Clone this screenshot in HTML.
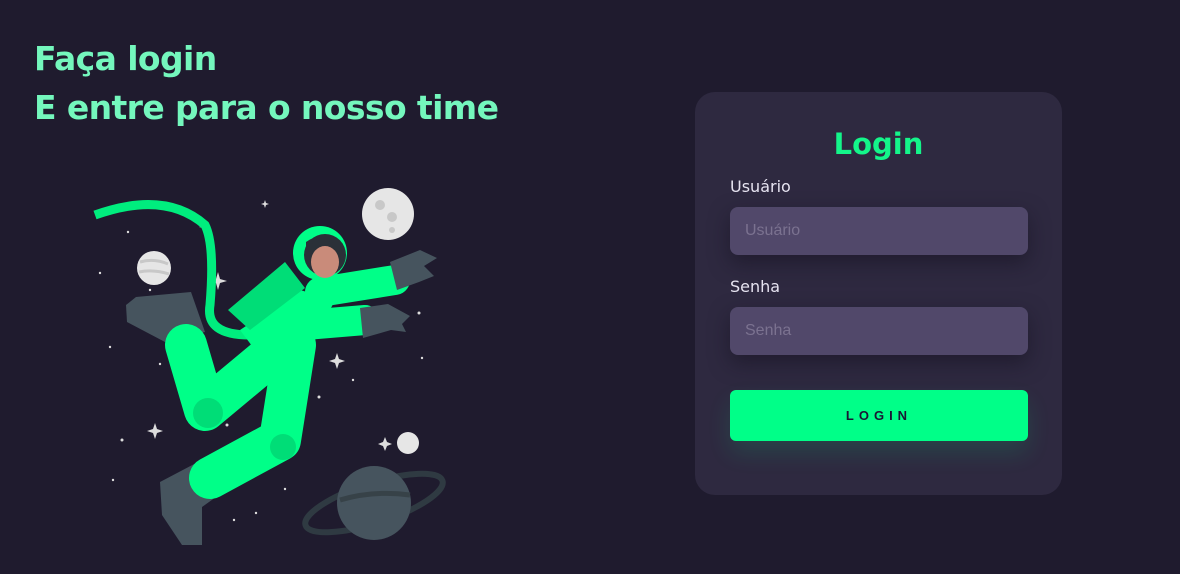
<!DOCTYPE html>
<html><head><meta charset="utf-8"><style>
html,body{margin:0;padding:0}
body{width:1180px;height:574px;background:#1f1b2e;overflow:hidden;position:relative;font-family:"Liberation Sans",sans-serif}
h1{position:absolute;left:34px;top:34px;margin:0;color:#74f7bd;font:bold 33px/49px "DejaVu Sans","Liberation Sans",sans-serif;letter-spacing:-0.6px}
.card{position:absolute;left:695px;top:92px;width:367px;height:403px;background:#2e2940;border-radius:20px}
.title{position:absolute;left:0;right:0;text-align:center;color:#14f58a;font:bold 29px "DejaVu Sans",sans-serif}
.card .title{top:35px}
.lbl{position:absolute;left:35px;color:#e6e3f0;font:16px "DejaVu Sans",sans-serif}
.inp{position:absolute;left:35px;width:298px;height:48px;background:#51486a;border-radius:8px;box-shadow:0 8px 20px rgba(20,16,30,.5);color:#7b7290;font-size:16px;line-height:48px;text-indent:15px}
.btn{position:absolute;left:35px;top:298px;width:298px;height:51px;background:#00ff88;border-radius:6px;box-shadow:0 12px 24px rgba(0,255,136,.12);color:#1a1633;font:bold 13px/51px "Liberation Sans",sans-serif;letter-spacing:5px;text-align:center}
</style></head><body>
<h1>Faça login<br>E entre para o nosso time</h1>
<svg style="position:absolute;left:0;top:0" width="600" height="574">
<g fill="#ddd">
<circle cx="128" cy="232" r="1.2"/><circle cx="100" cy="273" r="1.2"/><circle cx="110" cy="347" r="1.2"/><circle cx="160" cy="364" r="1.2"/><circle cx="122" cy="440" r="1.5"/><circle cx="113" cy="480" r="1.2"/><circle cx="227" cy="425" r="1.5"/><circle cx="319" cy="397" r="1.5"/><circle cx="353" cy="380" r="1.2"/><circle cx="419" cy="313" r="1.5"/><circle cx="422" cy="358" r="1.2"/><circle cx="256" cy="513" r="1.2"/><circle cx="285" cy="489" r="1.2"/><circle cx="234" cy="520" r="1.2"/><circle cx="150" cy="290" r="1.2"/>
<path d="M218 272l2 7 7 2-7 2-2 7-2-7-7-2 7-2z"/><path d="M337 353l2 6 6 2-6 2-2 6-2-6-6-2 6-2z"/><path d="M155 423l2 6 6 2-6 2-2 6-2-6-6-2 6-2z"/><path d="M385 437l2 5 5 2-5 2-2 5-2-5-5-2 5-2z"/><path d="M204 222l1 4 4 1-4 1-1 4-1-4-4-1 4-1z"/><path d="M265 200l1 3 3 1-3 1-1 3-1-3-3-1 3-1z"/>
</g>
<circle cx="388" cy="214" r="26" fill="#e6e6e6"/><circle cx="380" cy="205" r="5" fill="#c8c8c8"/><circle cx="392" cy="217" r="5" fill="#c8c8c8"/><circle cx="392" cy="230" r="3" fill="#c8c8c8"/>
<circle cx="154" cy="268" r="17" fill="#e6e6e6"/><path d="M140 262q14-4 28 2M139 272q14-3 30 2" stroke="#c8c8c8" stroke-width="3" fill="none"/>
<circle cx="408" cy="443" r="11" fill="#e6e6e6"/>
<ellipse cx="374" cy="503" rx="72" ry="20" fill="none" stroke="#2f3a42" stroke-width="6" transform="rotate(-18 374 503)"/>
<circle cx="374" cy="503" r="37" fill="#46545e"/>
<path d="M340 500q34-10 70-5" stroke="#374248" stroke-width="5" fill="none"/>
<path d="M95 215q70-25 110 10q10 20 5 80q-5 30 40 30" stroke="#00ed7e" stroke-width="9" fill="none"/>
<!-- boots -->
<path d="M126 305l10-8 55-5 14 40-40 10-38-20z" fill="#46545e"/>
<path d="M160 482l38-20 18 35-14 10 0 38-20 0-20-30z" fill="#46545e"/>
<!-- legs -->
<path d="M186 345 L205 410 L265 360" stroke="#00ff88" stroke-width="42" stroke-linejoin="round" stroke-linecap="round" fill="none"/>
<path d="M295 345 L280 440 L210 478" stroke="#00ff88" stroke-width="42" stroke-linejoin="round" stroke-linecap="round" fill="none"/>
<!-- torso -->
<path d="M240 330 L300 290 L335 300 L310 350 L270 370z" fill="#00ff88"/>
<!-- backpack -->
<path d="M228 310 L285 262 L305 288 L250 330z" fill="#00dd77"/>
<!-- arms -->
<path d="M320 292 L395 280" stroke="#00ff88" stroke-width="30" stroke-linecap="round" fill="none"/>
<path d="M305 325 L365 320" stroke="#00ff88" stroke-width="30" stroke-linecap="round" fill="none"/>
<path d="M390 262l30-12 17 8-13 8 10 10-15 6-22 8z" fill="#46545e"/>
<path d="M360 308l28-4 22 12-8 8 4 8-15-2-28 8z" fill="#46545e"/>
<circle cx="208" cy="413" r="15" fill="#00dd77"/><circle cx="283" cy="447" r="13" fill="#00dd77"/>
<circle cx="320" cy="253" r="27" fill="#00ff88"/><circle cx="325" cy="255" r="21" fill="#2a3038"/>
<ellipse cx="325" cy="262" rx="14" ry="16" fill="#c98b7a"/><path d="M306 248q18-15 34 0v-6q-17-12-34 0z" fill="#2a3038"/>
</svg>
<div class="card">
<div class="title">Login</div>
<div class="lbl" style="top:85px">Usuário</div>
<div class="inp" style="top:115px">Usuário</div>
<div class="lbl" style="top:185px">Senha</div>
<div class="inp" style="top:215px">Senha</div>
<div class="btn">LOGIN</div>
</div>
</body></html>
